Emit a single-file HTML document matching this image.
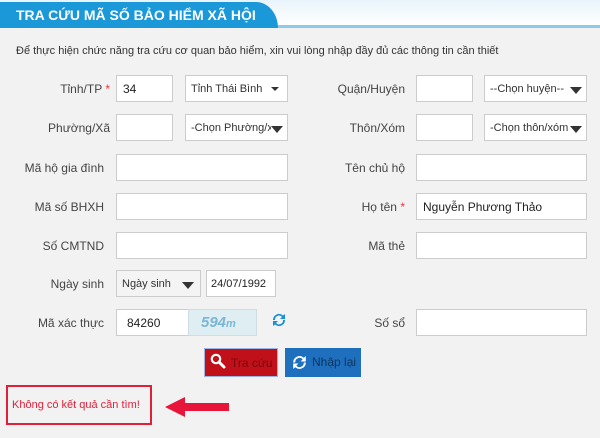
<!DOCTYPE html>
<html><head><meta charset="utf-8"><style>
*{box-sizing:border-box;margin:0;padding:0}
body{width:600px;height:438px;background:#f2f2f2;position:relative;overflow:hidden;font-family:"Liberation Sans",sans-serif;font-size:12px;color:#333}
.a{position:absolute}
.hdr{left:0;top:0;width:600px;height:28px;background:linear-gradient(#e8f4fb,#fff);border-bottom:3px solid #8fcbe8}
.tab{left:0;top:2px;width:278px;height:26px;background:#1a98d8;border-top-right-radius:22px 26px;color:#fff;font-weight:bold;font-size:14px;padding:5px 0 0 16px;white-space:nowrap}
.lbl{text-align:right;width:110px;font-size:12px;color:#444;white-space:nowrap}
.in{background:#fff;border:1px solid #ccc;height:27px;padding:6px 6px;font-size:12px;color:#222;white-space:nowrap;overflow:hidden}
.sel{background:#fff;border:1px solid #ccc;height:27px;padding:7px 5px;font-size:11px;color:#333;white-space:nowrap;overflow:hidden}
.tri{position:absolute;right:4px;top:11px;width:0;height:0;border-left:6px solid transparent;border-right:6px solid transparent;border-top:7px solid #333}
.star{color:#e33}
</style></head><body>
<div class="a hdr"></div>
<div class="a tab">TRA CỨU MÃ SỐ BẢO HIỂM XÃ HỘI</div>
<div class="a" style="left:16px;top:45px;font-size:11px;color:#333;white-space:nowrap">Để thực hiện chức năng tra cứu cơ quan bảo hiểm, xin vui lòng nhập đầy đủ các thông tin cần thiết</div>

<div class="a lbl" style="left:0;top:82px">Tỉnh/TP <span class="star">*</span></div>
<div class="a in" style="left:116px;top:75px;width:57px">34</div>
<div class="a sel" style="left:185px;top:75px;width:103px">Tỉnh Thái Bình<span style="position:absolute;right:8px;top:11px;border-left:4px solid transparent;border-right:4px solid transparent;border-top:4px solid #333"></span></div>

<div class="a lbl" style="left:295px;top:82px">Quận/Huyện</div>
<div class="a in" style="left:416px;top:75px;width:57px"></div>
<div class="a sel" style="left:484px;top:75px;width:103px">--Chọn huyện--<span class="tri"></span></div>

<div class="a lbl" style="left:0;top:121px">Phường/Xã</div>
<div class="a in" style="left:116px;top:114px;width:57px"></div>
<div class="a sel" style="left:185px;top:114px;width:103px"><span style="display:inline-block;width:80px;overflow:hidden">-Chọn Phường/xã</span><span class="tri"></span></div>

<div class="a lbl" style="left:295px;top:121px">Thôn/Xóm</div>
<div class="a in" style="left:416px;top:114px;width:57px"></div>
<div class="a sel" style="left:484px;top:114px;width:103px"><span style="display:inline-block;width:82px;overflow:hidden">-Chọn thôn/xóm</span><span class="tri"></span></div>

<div class="a lbl" style="left:-6px;top:161px">Mã hộ gia đình</div>
<div class="a in" style="left:116px;top:154px;width:172px"></div>
<div class="a lbl" style="left:295px;top:161px">Tên chủ hộ</div>
<div class="a in" style="left:416px;top:154px;width:171px"></div>

<div class="a lbl" style="left:-6px;top:200px">Mã số BHXH</div>
<div class="a in" style="left:116px;top:193px;width:172px"></div>
<div class="a lbl" style="left:295px;top:200px">Họ tên <span class="star">*</span></div>
<div class="a in" style="left:416px;top:193px;width:171px">Nguyễn Phương Thảo</div>

<div class="a lbl" style="left:-6px;top:239px">Số CMTND</div>
<div class="a in" style="left:116px;top:232px;width:172px"></div>
<div class="a lbl" style="left:295px;top:239px">Mã thẻ</div>
<div class="a in" style="left:416px;top:232px;width:171px"></div>

<div class="a lbl" style="left:-6px;top:277px">Ngày sinh</div>
<div class="a sel" style="left:116px;top:270px;width:85px;background:#f4f4f4">Ngày sinh<span class="tri" style="right:6px"></span></div>
<div class="a in" style="left:206px;top:270px;width:70px;padding:7px 4px;font-size:11px">24/07/1992</div>

<div class="a lbl" style="left:-6px;top:316px">Mã xác thực</div>
<div class="a in" style="left:116px;top:309px;width:73px;padding-left:10px">84260</div>
<div class="a" style="left:188px;top:309px;width:69px;height:27px;background:#dfeef3;border:1px solid #d0dde3;color:#7ab6d6;font-weight:bold;font-size:15px;padding:4px 0 0 12px;font-style:italic">594<span style="font-size:11px">m</span></div>
<svg class="a" style="left:270px;top:311px" width="18" height="18" viewBox="0 0 18 18"><path d="M3 9a6 6 0 0 1 10-4.5L15 3v5h-5l2-2A4 4 0 0 0 5 9z" fill="#1a8fd6"/><path d="M15 9a6 6 0 0 1-10 4.5L3 15v-5h5l-2 2a4 4 0 0 0 7-3z" fill="#1a8fd6"/></svg>
<div class="a lbl" style="left:295px;top:316px">Số sổ</div>
<div class="a in" style="left:416px;top:309px;width:171px"></div>

<div class="a" style="left:204px;top:348px;width:74px;height:29px;background:#c0101a;border:1px solid #9bb5e0;color:#7a0a0a;font-size:12px;padding:7px 0 0 26px">Tra cứu</div>
<svg class="a" style="left:210px;top:353px" width="16" height="18" viewBox="0 0 16 18"><circle cx="6" cy="6" r="4.2" fill="none" stroke="#fff" stroke-width="2.2"/><path d="M9 9l5 5" stroke="#fff" stroke-width="3" stroke-linecap="round"/></svg>
<div class="a" style="left:285px;top:348px;width:76px;height:29px;background:#1e6fbd;color:#0d3560;font-size:12px;padding:7px 0 0 27px">Nhập lại</div>
<svg class="a" style="left:290px;top:353px" width="19" height="19" viewBox="0 0 18 18"><path d="M3 9a6 6 0 0 1 10-4.5L15 3v5h-5l2-2A4 4 0 0 0 5 9z" fill="#fff"/><path d="M15 9a6 6 0 0 1-10 4.5L3 15v-5h5l-2 2a4 4 0 0 0 7-3z" fill="#fff"/></svg>

<div class="a" style="left:6px;top:385px;width:146px;height:40px;border:2px solid #e0203a;color:#e0203a;font-size:11px;padding:12px 0 0 4px;white-space:nowrap">Không có kết quả cần tìm!</div>
<svg class="a" style="left:163px;top:395px" width="70" height="24" viewBox="0 0 70 24"><path d="M2 12L22 2v6h44v8H22v6z" fill="#e8153a"/></svg>
</body></html>
